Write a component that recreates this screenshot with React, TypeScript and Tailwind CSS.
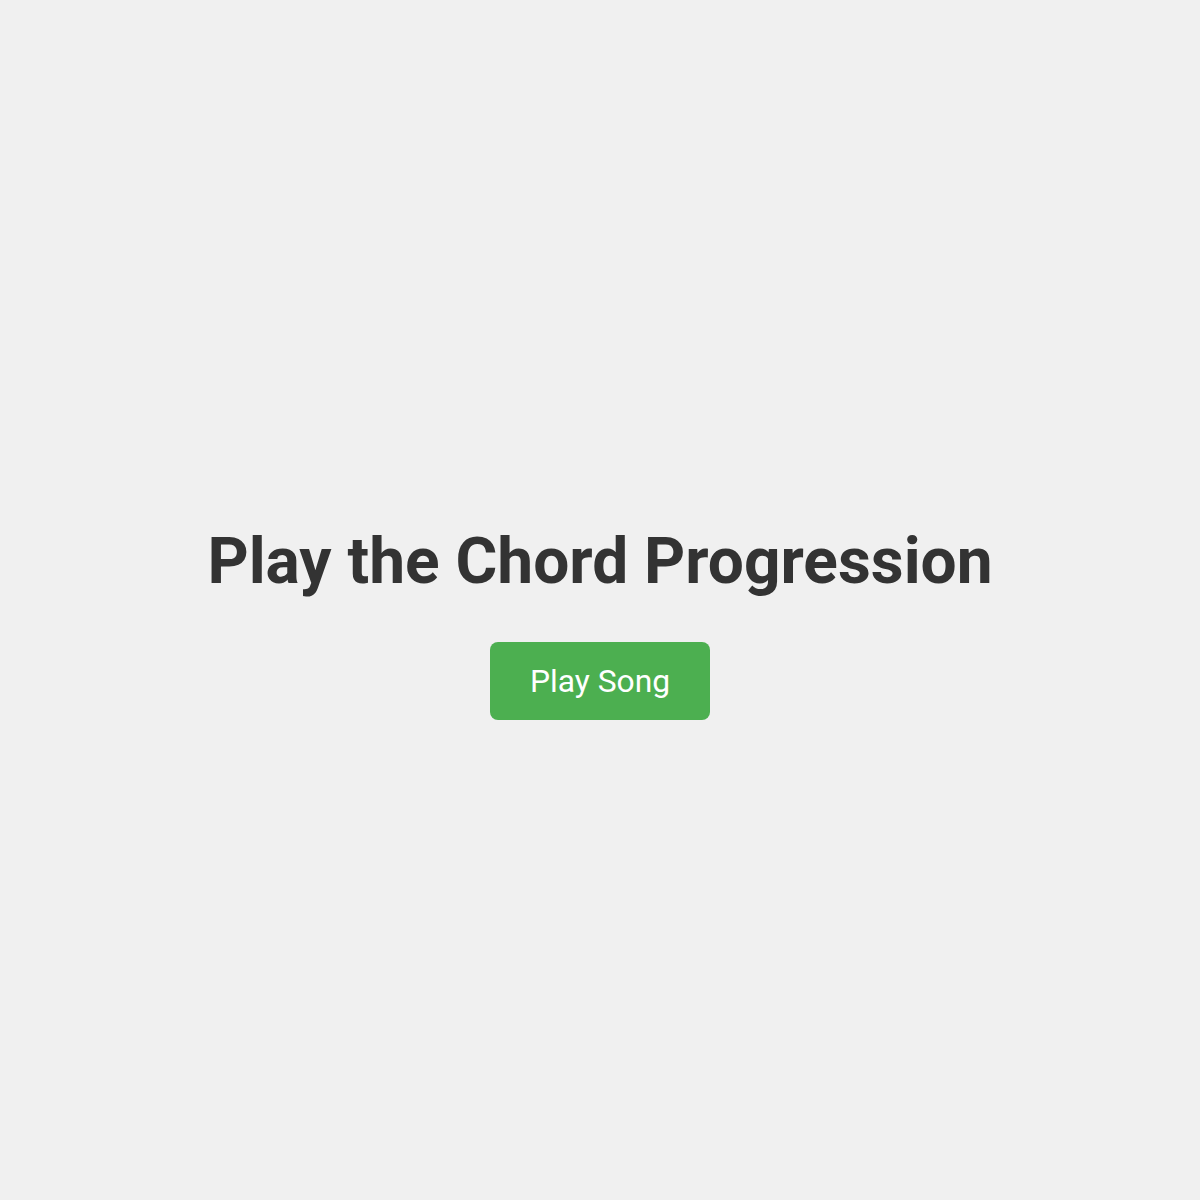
export default function App() {
  return (
    <div className="flex min-h-screen flex-col items-center justify-center bg-[#f0f0f0] font-['Roboto',sans-serif]">
      <h1 className="my-[43px] text-[64px] font-bold leading-[normal] text-[#333333]">
        Play the Chord Progression
      </h1>
      <button className="rounded-lg bg-[#4caf50] px-10 py-5 text-[31.8px] leading-[normal] text-white">
        Play Song
      </button>
    </div>
  );
}
